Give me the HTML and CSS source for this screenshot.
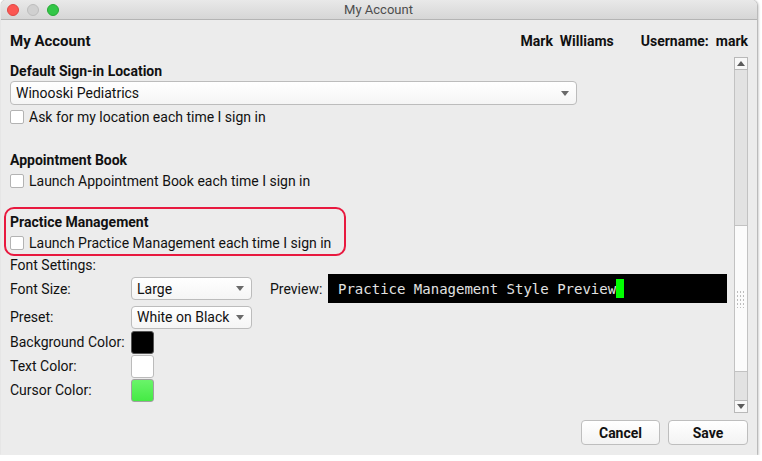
FILE: index.html
```html
<!DOCTYPE html>
<html lang="en">
<head>
    <meta charset="UTF-8">
    <title>My Account</title>
    <link rel="stylesheet" href="styles.css">
</head>
<body>
    <div class="window">
        <div class="titlebar">
            <div class="lights">
                <span class="light red"></span>
                <span class="light gray"></span>
                <span class="light green"></span>
            </div>
            <div class="title">My Account</div>
        </div>

        <div class="main">
            <div class="header">
                <div class="heading">My Account</div>
                <div class="user-info">
                    <span>Mark&nbsp; Williams</span>
                    <span>Username:&nbsp; mark</span>
                </div>
            </div>

            <div class="scroll-area">
                <div class="content">
                    <div class="section">
                        <div class="section-title">Default Sign-in Location</div>
                        <div class="combo location">
                            <span>Winooski Pediatrics</span>
                            <span class="arrow"></span>
                        </div>
                        <div class="check-row">
                            <span class="checkbox"></span>
                            <span>Ask for my location each time I sign in</span>
                        </div>
                    </div>

                    <div class="section spaced">
                        <div class="section-title">Appointment Book</div>
                        <div class="check-row">
                            <span class="checkbox"></span>
                            <span>Launch Appointment Book each time I sign in</span>
                        </div>
                    </div>

                    <div class="section highlight">
                        <div class="section-title">Practice Management</div>
                        <div class="check-row">
                            <span class="checkbox"></span>
                            <span>Launch Practice Management each time I sign in</span>
                        </div>
                    </div>

                    <div class="font-settings">
                        <div class="font-label">Font Settings:</div>
                        <div class="setting-row first">
                            <span class="setting-label">Font Size:</span>
                            <div class="combo small">
                                <span>Large</span>
                                <span class="arrow"></span>
                            </div>
                            <span class="preview-label">Preview:</span>
                            <div class="preview">Practice Management Style Preview<span class="cursor"></span></div>
                        </div>
                        <div class="setting-row preset">
                            <span class="setting-label">Preset:</span>
                            <div class="combo small">
                                <span>White on Black</span>
                                <span class="arrow"></span>
                            </div>
                        </div>
                        <div class="setting-row">
                            <span class="setting-label">Background Color:</span>
                            <span class="swatch black"></span>
                        </div>
                        <div class="setting-row">
                            <span class="setting-label">Text Color:</span>
                            <span class="swatch white"></span>
                        </div>
                        <div class="setting-row">
                            <span class="setting-label">Cursor Color:</span>
                            <span class="swatch green"></span>
                        </div>
                    </div>
                </div>

                <div class="scrollbar">
                    <div class="scroll-btn"><span class="up"></span></div>
                    <div class="track top"></div>
                    <div class="thumb"><span class="grip"></span></div>
                    <div class="track bottom"></div>
                    <div class="scroll-btn"><span class="down"></span></div>
                </div>
            </div>

            <div class="footer">
                <button class="btn cancel">Cancel</button>
                <button class="btn save">Save</button>
            </div>
        </div>
    </div>
</body>
</html>
```

FILE: styles.css
```css
body {
    margin: 0;
    background-color: #ffffff;
    font-family: Roboto, "Liberation Sans", sans-serif;
    font-size: 14px;
    color: #111111;
}

.window {
    width: 756px;
    height: 455px;
    margin-left: 1px;
    background-color: #ececec;
    display: flex;
    flex-direction: column;
    border-radius: 5px 5px 0 0;
    box-shadow: 0 0 1px rgba(0, 0, 0, 0.5), 1px 1px 3px rgba(0, 0, 0, 0.35);
}

.titlebar {
    height: 19px;
    border-bottom: 1px solid #b4b4b4;
    background: linear-gradient(#e9e9e9, #d6d6d6);
    border-radius: 5px 5px 0 0;
    display: flex;
    align-items: center;
    font-size: 13px;
}

.lights {
    display: flex;
    gap: 8px;
    padding-left: 6px;
    width: 120px;
}

.light {
    width: 12px;
    height: 12px;
    border-radius: 50%;
    box-sizing: border-box;
}

.light.red {
    background-color: #fc5753;
    border: 1px solid #df4744;
}

.light.gray {
    background-color: #d0d0d0;
    border: 1px solid #bdbdbd;
}

.light.green {
    background-color: #33c748;
    border: 1px solid #27aa35;
}

.title {
    flex: 1;
    text-align: center;
    color: #4d4d4d;
    padding-right: 127px;
}

.main {
    flex: 1;
    display: flex;
    flex-direction: column;
    padding: 0 9px;
}

.header {
    display: flex;
    justify-content: space-between;
    align-items: center;
    height: 20px;
    margin-top: 11px;
    font-weight: bold;
}

.heading {
    font-size: 15px;
}

.user-info {
    display: flex;
    gap: 27px;
}

.scroll-area {
    display: flex;
    margin-top: 6px;
    height: 356px;
}

.content {
    flex: 1;
    padding-top: 5px;
}

.section-title {
    font-weight: bold;
    line-height: 18px;
    height: 18px;
}

.combo {
    box-sizing: border-box;
    border: 1px solid #bcbcbc;
    border-radius: 4px;
    background: linear-gradient(#ffffff, #f5f5f5);
    display: flex;
    align-items: center;
    justify-content: space-between;
    padding: 0 7px 0 5px;
}

.combo.location {
    width: 567px;
    height: 24px;
    margin-top: 1px;
}

.combo.small {
    width: 121px;
    height: 23px;
}

.arrow {
    width: 0;
    height: 0;
    border-left: 4px solid transparent;
    border-right: 4px solid transparent;
    border-top: 5px solid #6a6a6a;
}

.check-row {
    display: flex;
    align-items: center;
    gap: 5px;
    height: 20px;
    margin-top: 2px;
}

.checkbox {
    width: 14px;
    height: 14px;
    box-sizing: border-box;
    border: 1px solid #b3b3b3;
    border-radius: 2px;
    background-color: #ffffff;
}

.section.spaced {
    margin-top: 24px;
}

.section.highlight {
    margin: 16px 0 0 -6px;
    width: 342px;
    box-sizing: border-box;
    border: 2px solid #e8193f;
    border-radius: 10px;
    padding: 4px 0 1px 4px;
}

.font-label {
    line-height: 18px;
    height: 18px;
}

.setting-row {
    display: flex;
    align-items: center;
    height: 24px;
}

.setting-row.first {
    height: 29px;
}

.setting-row.preset {
    margin-top: 2px;
    margin-bottom: 1px;
}

.setting-label {
    width: 121px;
}

.preview-label {
    margin-left: 18px;
    width: 58px;
}

.preview {
    width: 399px;
    height: 29px;
    box-sizing: border-box;
    background-color: #000000;
    color: #e2e2e2;
    font-family: "DejaVu Sans Mono", monospace;
    font-size: 14px;
    padding-left: 10px;
    display: flex;
    align-items: center;
}

.cursor {
    display: inline-block;
    width: 8px;
    height: 19px;
    background-color: #00ff00;
}

.swatch {
    width: 23px;
    height: 23px;
    box-sizing: border-box;
    border: 1px solid #9a9a9a;
    border-radius: 3px;
}

.swatch.black {
    background-color: #000000;
    border-color: #555555;
}

.swatch.white {
    background-color: #ffffff;
    border-color: #bbbbbb;
}

.swatch.green {
    background: linear-gradient(#6af46a, #45ea45);
    border-color: #a0a0a0;
}

.scrollbar {
    width: 14px;
    display: flex;
    flex-direction: column;
}

.scroll-btn {
    height: 13px;
    box-sizing: border-box;
    border: 1px solid #b9b9b9;
    background-color: #f8f8f8;
    display: flex;
    align-items: center;
    justify-content: center;
}

.up {
    border-left: 4px solid transparent;
    border-right: 4px solid transparent;
    border-bottom: 5px solid #5c5c5c;
}

.down {
    border-left: 4px solid transparent;
    border-right: 4px solid transparent;
    border-top: 5px solid #5c5c5c;
}

.track {
    box-sizing: border-box;
    background-color: #e2e2e2;
    border-left: 1px solid #c2c2c2;
    border-right: 1px solid #c2c2c2;
}

.track.top {
    height: 155px;
}

.track.bottom {
    height: 28px;
}

.thumb {
    height: 147px;
    box-sizing: border-box;
    background-color: #fbfbfb;
    border: 1px solid #c2c2c2;
    display: flex;
    align-items: center;
    justify-content: center;
}

.grip {
    width: 10px;
    height: 18px;
    background-image: radial-gradient(#bdbdbd 0.8px, transparent 1px);
    background-size: 3px 4px;
}

.footer {
    display: flex;
    justify-content: flex-end;
    gap: 8px;
    margin-top: 7px;
}

.btn {
    height: 25px;
    box-sizing: border-box;
    border: 1px solid #bebebe;
    border-radius: 4px;
    background: linear-gradient(#ffffff, #f3f3f3);
    font-family: Roboto, "Liberation Sans", sans-serif;
    font-size: 14px;
    font-weight: bold;
    color: #111111;
    padding: 0;
}

.btn.cancel {
    width: 79px;
}

.btn.save {
    width: 80px;
}
```
